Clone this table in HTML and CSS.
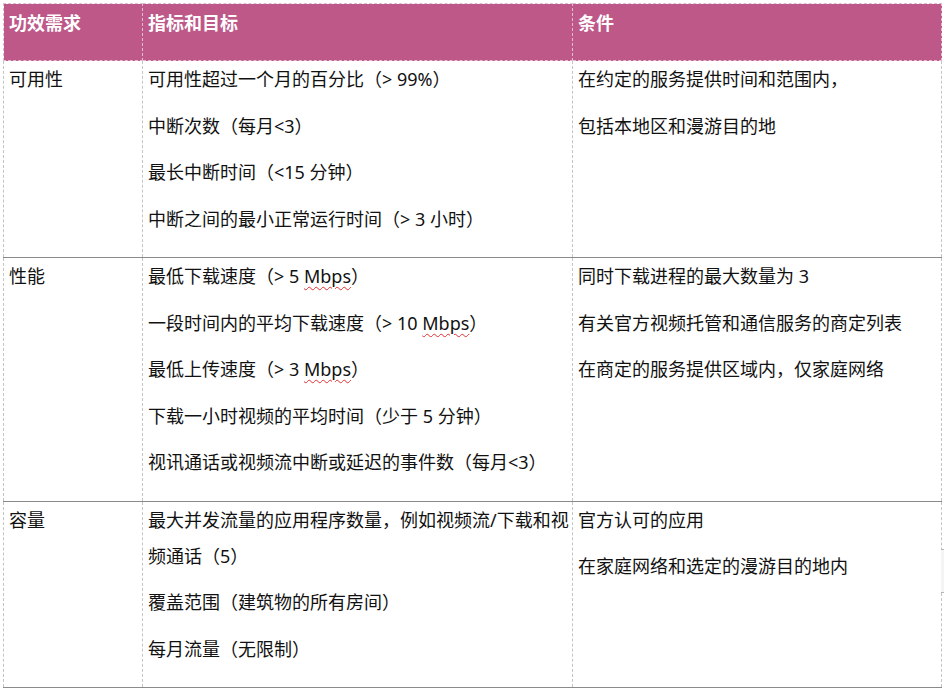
FILE: index.html
```html
<!DOCTYPE html>
<html lang="zh-CN">
<head>
<meta charset="utf-8">
<title>功效需求</title>
<link rel="stylesheet" href="styles.css">
</head>
<body>
<div class="page">
  <table class="req">
    <colgroup>
      <col class="c1"><col class="c2"><col class="c3">
    </colgroup>
    <thead>
      <tr>
        <th>功效需求</th>
        <th>指标和目标</th>
        <th>条件</th>
      </tr>
    </thead>
    <tbody>
      <tr>
        <td><p>可用性</p></td>
        <td>
          <p>可用性超过一个月的百分比（&gt; 99%）</p>
          <p>中断次数（每月&lt;3）</p>
          <p>最长中断时间（&lt;15 分钟）</p>
          <p>中断之间的最小正常运行时间（&gt; 3 小时）</p>
        </td>
        <td>
          <p>在约定的服务提供时间和范围内，</p>
          <p>包括本地区和漫游目的地</p>
        </td>
      </tr>
      <tr>
        <td><p>性能</p></td>
        <td>
          <p>最低下载速度（&gt; 5 <span class="spell">Mbps</span>）</p>
          <p>一段时间内的平均下载速度（&gt; 10 <span class="spell">Mbps</span>）</p>
          <p>最低上传速度（&gt; 3 <span class="spell">Mbps</span>）</p>
          <p>下载一小时视频的平均时间（少于 5 分钟）</p>
          <p>视讯通话或视频流中断或延迟的事件数（每月&lt;3）</p>
        </td>
        <td>
          <p>同时下载进程的最大数量为 3</p>
          <p>有关官方视频托管和通信服务的商定列表</p>
          <p>在商定的服务提供区域内，仅家庭网络</p>
        </td>
      </tr>
      <tr>
        <td><p>容量</p></td>
        <td>
          <p>最大并发流量的应用程序数量，例如视频流/下载和视频通话（5）</p>
          <p>覆盖范围（建筑物的所有房间）</p>
          <p>每月流量（无限制）</p>
        </td>
        <td>
          <p>官方认可的应用</p>
          <p>在家庭网络和选定的漫游目的地内</p>
        </td>
      </tr>
    </tbody>
  </table>
  <div class="edge-tab"></div>
</div>
</body>
</html>
```

FILE: styles.css
```css
html, body {
  margin: 0;
  padding: 0;
  background: #ffffff;
}

.page {
  position: relative;
  padding: 3px 0 0 3px;
  width: 941px;
  height: 686px;
  overflow: hidden;
}

.req {
  border-collapse: collapse;
  table-layout: fixed;
  width: 938px;
  font-family: "Noto Sans", "Noto Sans CJK SC", sans-serif;
  font-size: 18px;
  color: #111111;
}

.c1 { width: 139px; }
.c2 { width: 430px; }
.c3 { width: 369px; }

.req th {
  background: #bd5889;
  color: #ffffff;
  font-weight: bold;
  text-align: left;
  vertical-align: top;
  height: 57px;
  box-sizing: border-box;
  padding: 1px 3px 0 5px;
  line-height: 36px;
  border: 1px dashed #e2bcd0;
}

.req td {
  vertical-align: top;
  padding: 0 3px 10px 5px;
  border-left: 1px dashed #c4c4c4;
  border-right: 1px dashed #c4c4c4;
  border-bottom: 1px solid #8a8a8a;
}

.req p {
  margin: 0 0 10.5px;
  line-height: 36px;
}

.spell {
  text-decoration: underline wavy #e03030;
  text-decoration-thickness: 1px;
  text-underline-offset: 3px;
}

.edge-tab {
  position: absolute;
  left: 941px;
  top: 549px;
  width: 3px;
  height: 42px;
  background: #f4f4f4;
  border-top: 1px solid #b5b5b5;
  border-bottom: 1px solid #b5b5b5;
}
```
